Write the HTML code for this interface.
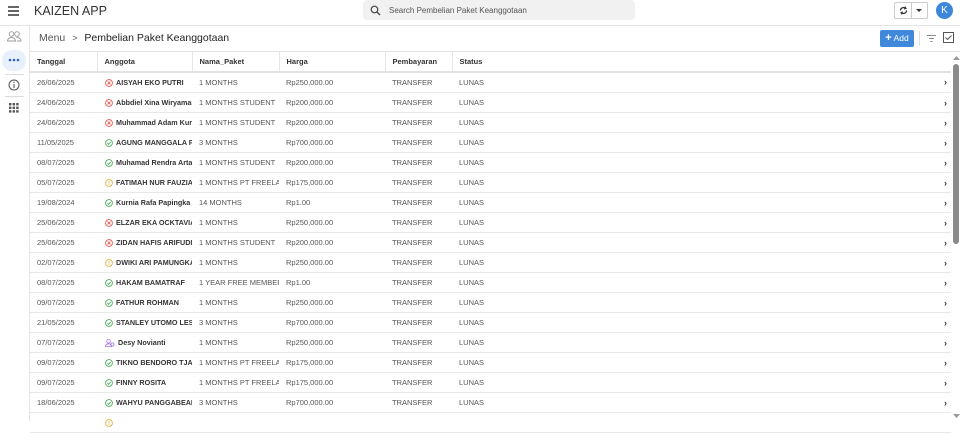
<!DOCTYPE html>
<html><head><meta charset="utf-8"><style>
*{box-sizing:border-box;margin:0;padding:0}
body{width:960px;height:421px;overflow:hidden;background:#fff;font-family:"Liberation Sans",Arial,sans-serif;position:relative;color:#333}
.a{position:absolute}
.top{left:0;top:0;width:960px;height:26px;border-bottom:1px solid #e4e4e4}
.side{left:0;top:26px;width:30px;height:395px;border-right:1px solid #e4e4e4}
.crumb{left:30px;top:26px;width:930px;height:26px;border-bottom:1px solid #e4e4e4}
table{position:absolute;left:30px;top:52px;width:921px;border-collapse:collapse;font-size:7.5px;table-layout:fixed}
th{height:20px;text-align:left;font-weight:bold;color:#333;padding-left:7px;border-right:1px solid #e6e6e6;border-bottom:2px solid #e2e2e2}
th.l,th:last-child{border-right:none}
td{height:20px;padding-left:7px;padding-top:1px;color:#555;border-bottom:1px solid #e8e8e8;white-space:nowrap;overflow:hidden}
td.n{font-weight:bold;color:#333;padding-left:8px;font-size:7.2px}
td.n svg{vertical-align:-2px;margin-right:3px}
td.c{text-align:right;padding-right:4px;font-size:9px;color:#333;font-weight:bold}
</style></head><body>
<div class="a top"></div>
<svg class="a" style="left:8px;top:6px" width="12" height="10"><path d="M0 1h11M0 5h11M0 9h11" stroke="#333" stroke-width="1.4"/></svg>
<div class="a" style="left:34px;top:4px;font-size:12.5px;color:#333">KAIZEN APP</div>
<div class="a" style="left:363px;top:0;width:272px;height:20px;background:#f1f1f1;border-radius:4px"></div>
<svg class="a" style="left:370px;top:5px" width="11" height="11"><circle cx="4.5" cy="4.5" r="3.3" fill="none" stroke="#444" stroke-width="1.2"/><path d="M7 7l3 3" stroke="#444" stroke-width="1.3"/></svg>
<div class="a" style="left:389px;top:6px;font-size:8px;color:#555">Search Pembelian Paket Keanggotaan</div>
<div class="a" style="left:894px;top:2px;width:34px;height:17px;border:1px solid #ccc;border-radius:2px"></div>
<div class="a" style="left:911px;top:2px;width:1px;height:17px;background:#ccc"></div>
<svg class="a" style="left:898px;top:5px" width="11" height="11"><path d="M2.5 5.5a3 3 0 0 1 5-2.2M8.5 5.5a3 3 0 0 1-5 2.2" fill="none" stroke="#333" stroke-width="1.2"/><path d="M7 1.5l1 2-2 .5M4 9.5l-1-2 2-.5" fill="none" stroke="#333" stroke-width="1"/></svg>
<svg class="a" style="left:916px;top:9px" width="6" height="4"><path d="M0 0h6L3 3z" fill="#333"/></svg>
<div class="a" style="left:936px;top:2px;width:17px;height:17px;border-radius:50%;background:#3c87d9;color:#fff;font-size:10px;text-align:center;line-height:17px">K</div>
<div class="a side"></div>
<svg class="a" style="left:7px;top:31px" width="15" height="11"><circle cx="4.5" cy="3" r="2.3" fill="none" stroke="#999" stroke-width=".9"/><path d="M.5 10a4 3.5 0 0 1 8 0z" fill="none" stroke="#999" stroke-width=".9"/><circle cx="10" cy="3" r="2.3" fill="none" stroke="#999" stroke-width=".9"/><path d="M9.5 6.5a4 3.5 0 0 1 4.5 3.5h-4" fill="none" stroke="#999" stroke-width=".9"/></svg>
<div class="a" style="left:2px;top:50px;width:24px;height:21px;border-radius:10px;background:#e8f0fb"></div>
<svg class="a" style="left:8px;top:58px" width="12" height="4"><circle cx="2" cy="2" r="1.3" fill="#2b66c0"/><circle cx="6" cy="2" r="1.3" fill="#2b66c0"/><circle cx="10" cy="2" r="1.3" fill="#2b66c0"/></svg>
<div class="a" style="left:5px;top:74px;width:19px;height:1px;background:#ddd"></div>
<svg class="a" style="left:8px;top:79px" width="12" height="12"><circle cx="6" cy="6" r="5" fill="none" stroke="#555" stroke-width="1"/><path d="M6 5v4" stroke="#555" stroke-width="1.1"/><circle cx="6" cy="3.3" r=".7" fill="#555"/></svg>
<div class="a" style="left:5px;top:96px;width:19px;height:1px;background:#ddd"></div>
<svg class="a" style="left:9px;top:103px" width="10" height="10"><g fill="#555"><rect x="0" y="0" width="2.4" height="2.4"/><rect x="3.6" y="0" width="2.4" height="2.4"/><rect x="7.2" y="0" width="2.4" height="2.4"/><rect x="0" y="3.6" width="2.4" height="2.4"/><rect x="3.6" y="3.6" width="2.4" height="2.4"/><rect x="7.2" y="3.6" width="2.4" height="2.4"/><rect x="0" y="7.2" width="2.4" height="2.4"/><rect x="3.6" y="7.2" width="2.4" height="2.4"/><rect x="7.2" y="7.2" width="2.4" height="2.4"/></g></svg>
<div class="a crumb"></div>
<div class="a" style="left:39px;top:32px;font-size:10.5px;color:#555">Menu <span style="font-size:9px;margin:0 4px">&gt;</span> <span style="color:#222">Pembelian Paket Keanggotaan</span></div>
<div class="a" style="left:880px;top:30px;width:34px;height:17px;background:#3f88da;border-radius:2px;color:#fff;font-size:8.5px;line-height:17px;text-align:center"><b style="font-size:11px">+</b> Add</div>
<div class="a" style="left:919px;top:31px;width:1px;height:15px;background:#ddd"></div>
<svg class="a" style="left:927px;top:35px" width="9" height="7"><path d="M0 .5h9M2 3.5h5M3.5 6.5h2" stroke="#888" stroke-width=".9"/></svg>
<svg class="a" style="left:943px;top:32px" width="11" height="11"><rect x=".5" y=".5" width="10" height="10" fill="none" stroke="#555"/><path d="M2.5 5.5l2 2 4-4" fill="none" stroke="#555"/></svg>
<div class="a" style="left:953px;top:64px;width:6px;height:180px;background:#8a8a8a;border-radius:3px"></div>
<svg class="a" style="left:953px;top:56px" width="7" height="5"><path d="M0 4h7L3.5 0z" fill="#999"/></svg>
<svg class="a" style="left:953px;top:414px" width="7" height="5"><path d="M0 0h7L3.5 4z" fill="#999"/></svg>
<table>
<tr><th style="width:67px">Tanggal</th><th style="width:95px">Anggota</th><th style="width:87px">Nama_Paket</th><th style="width:106px">Harga</th><th style="width:67px">Pembayaran</th><th class="l">Status</th><th style="width:20px"></th></tr>
</table>
<table style="top:72px" id="t"></table>
<script>
var X='<svg width="8" height="8"><circle cx="4" cy="4" r="3.4" fill="none" stroke="#e05a52" stroke-width=".9"/><path d="M2.6 2.6l2.8 2.8M5.4 2.6l-2.8 2.8" stroke="#e05a52" stroke-width=".9"/></svg>';
var C='<svg width="8" height="8"><circle cx="4" cy="4" r="3.4" fill="none" stroke="#4cae5a" stroke-width=".9"/><path d="M2.4 4.1l1.2 1.2 2.2-2.3" fill="none" stroke="#4cae5a" stroke-width=".9"/></svg>';
var I='<svg width="8" height="8"><circle cx="4" cy="4" r="3.4" fill="none" stroke="#e2b23c" stroke-width=".9"/><path d="M4 2v2.6" stroke="#e2b23c" stroke-width=".9"/><circle cx="4" cy="5.8" r=".5" fill="#e2b23c"/></svg>';
var P='<svg width="10" height="8"><circle cx="3.5" cy="2.3" r="1.8" fill="none" stroke="#a36ee8" stroke-width=".8"/><path d="M.5 7.5a3 2.7 0 0 1 6 0z" fill="none" stroke="#a36ee8" stroke-width=".8"/><circle cx="7.5" cy="5.5" r="1.6" fill="none" stroke="#a36ee8" stroke-width=".8"/></svg>';
var d=[["26/06/2025",X,"AISYAH EKO PUTRI","1 MONTHS","Rp250,000.00"],["24/06/2025",X,"Abbdiel Xina Wiryamant","1 MONTHS STUDENT","Rp200,000.00"],["24/06/2025",X,"Muhammad Adam Kurni","1 MONTHS STUDENT","Rp200,000.00"],["11/05/2025",C,"AGUNG MANGGALA PU","3 MONTHS","Rp700,000.00"],["08/07/2025",C,"Muhamad Rendra Artadi","1 MONTHS STUDENT","Rp200,000.00"],["05/07/2025",I,"FATIMAH NUR FAUZIA","1 MONTHS PT FREELANCE","Rp175,000.00"],["19/08/2024",C,"Kurnia Rafa Papingka","14 MONTHS","Rp1.00"],["25/06/2025",X,"ELZAR EKA OCKTAVIAN","1 MONTHS","Rp250,000.00"],["25/06/2025",X,"ZIDAN HAFIS ARIFUDIN","1 MONTHS STUDENT","Rp200,000.00"],["02/07/2025",I,"DWIKI ARI PAMUNGKAS","1 MONTHS","Rp250,000.00"],["08/07/2025",C,"HAKAM BAMATRAF","1 YEAR FREE MEMBERSHIP","Rp1.00"],["09/07/2025",C,"FATHUR ROHMAN","1 MONTHS","Rp250,000.00"],["21/05/2025",C,"STANLEY UTOMO LESMANA","3 MONTHS","Rp700,000.00"],["07/07/2025",P,"Desy Novianti","1 MONTHS","Rp250,000.00"],["09/07/2025",C,"TIKNO BENDORO TJANDRA","1 MONTHS PT FREELANCE","Rp175,000.00"],["09/07/2025",C,"FINNY ROSITA","1 MONTHS PT FREELANCE","Rp175,000.00"],["18/06/2025",C,"WAHYU PANGGABEAN","3 MONTHS","Rp700,000.00"],["",I,"","",""]];
var h='<tr style="height:0"><td style="width:67px;height:0;padding:0;border:0"></td><td style="width:95px;height:0;padding:0;border:0"></td><td style="width:87px;height:0;padding:0;border:0"></td><td style="width:106px;height:0;padding:0;border:0"></td><td style="width:67px;height:0;padding:0;border:0"></td><td style="height:0;padding:0;border:0"></td><td style="width:20px;height:0;padding:0;border:0"></td></tr>';
d.forEach(function(r){h+='<tr><td>'+r[0]+'</td><td class="n">'+r[1]+r[2]+'</td><td>'+r[3]+'</td><td>'+r[4]+'</td><td>'+(r[0]?'TRANSFER':'')+'</td><td>'+(r[0]?'LUNAS':'')+'</td><td class="c">'+(r[0]?'&#8250;':'')+'</td></tr>'});
document.getElementById('t').innerHTML=h;
</script>
</body></html>
